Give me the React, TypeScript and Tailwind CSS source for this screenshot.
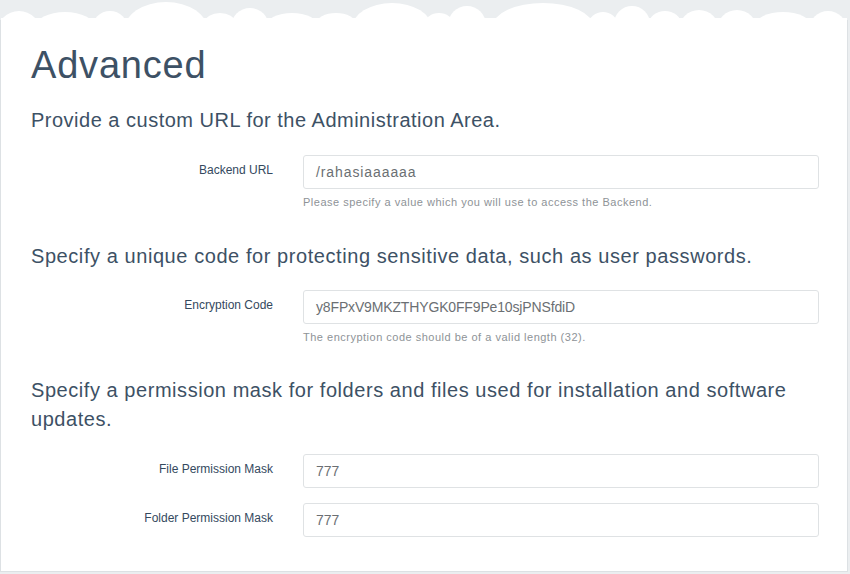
import React from "react";

const font = { fontFamily: '"Liberation Sans", Arial, Helvetica, sans-serif' };

function Clouds() {
  return (
    <svg
      className="absolute left-[1px] top-0"
      width="846"
      height="40"
      viewBox="1 0 846 40"
      aria-hidden="true"
    >
      <g fill="#ffffff">
        <rect x="0" y="18" width="850" height="22" />
        <circle cx="19" cy="33" r="22" />
        <ellipse cx="65" cy="27" rx="30" ry="15" />
        <circle cx="110" cy="29" r="18" />
        <ellipse cx="166" cy="30" rx="42" ry="28" />
        <ellipse cx="220" cy="22" rx="15" ry="9" />
        <circle cx="250" cy="27" r="19" />
        <ellipse cx="292" cy="26" rx="26" ry="13" />
        <ellipse cx="336" cy="24" rx="20" ry="11" />
        <ellipse cx="392" cy="28" rx="40" ry="25" />
        <ellipse cx="439" cy="24" rx="14" ry="11" />
        <circle cx="467" cy="25" r="19" />
        <ellipse cx="543" cy="26" rx="50" ry="23" />
        <ellipse cx="603" cy="24" rx="14" ry="12" />
        <circle cx="632" cy="24" r="18" />
        <ellipse cx="665" cy="24" rx="16" ry="13" />
        <circle cx="699" cy="30" r="20" />
        <circle cx="737" cy="30" r="20" />
        <ellipse cx="783" cy="26" rx="28" ry="14" />
        <circle cx="828" cy="30" r="19" />
      </g>
    </svg>
  );
}

function Field({
  label,
  value,
  help,
  valueClass = "",
}: {
  label: string;
  value: string;
  help?: string;
  valueClass?: string;
}) {
  return (
    <div className="flex">
      <div className="w-[242px] shrink-0 pt-[7px] text-right text-[12px] leading-[16px] text-[#34495e]">
        {label}
      </div>
      <div className="ml-[30px] flex-1">
        <div
          className={`flex h-[34px] items-center rounded-[3px] border border-[#dfe2e4] bg-white px-[12px] text-[14px] leading-[20px] text-[#6b6f73] ${valueClass}`}
        >
          {value}
        </div>
        {help && (
          <div className="mt-[5px] text-[11px] leading-[16px] tracking-[0.5px] text-[#8e9397]">
            {help}
          </div>
        )}
      </div>
    </div>
  );
}

export default function App() {
  return (
    <div
      className="relative h-[574px] w-[850px] overflow-hidden bg-[#ebeef0]"
      style={font}
    >
      <div className="ml-0 mt-[20px] h-[552px] w-[848px] border-x border-b border-[#dde1e4] bg-white pl-[30px] pr-[28px] pt-[24px]">
        <h1 className="text-[38px] font-normal leading-[42px] tracking-[0.8px] text-[#3d5165]">
          Advanced
        </h1>

        <h4 className="mt-[19px] text-[20px] font-normal leading-[30px] tracking-[0.5px] text-[#3d5165]">
          Provide a custom URL for the Administration Area.
        </h4>
        <div className="mt-[20px]">
          <Field
            label="Backend URL"
            value="/rahasiaaaaaa"
            valueClass="tracking-[0.9px]"
            help="Please specify a value which you will use to access the Backend."
          />
        </div>

        <h4 className="mt-[31px] text-[20px] font-normal leading-[30px] tracking-[0.57px] text-[#3d5165]">
          Specify a unique code for protecting sensitive data, such as user passwords.
        </h4>
        <div className="mt-[19px]">
          <Field
            label="Encryption Code"
            value="y8FPxV9MKZTHYGK0FF9Pe10sjPNSfdiD"
            valueClass="tracking-[-0.15px]"
            help="The encryption code should be of a valid length (32)."
          />
        </div>

        <h4 className="mt-[31px] pr-[30px] text-[20px] font-normal leading-[29px] tracking-[0.55px] text-[#3d5165]">
          Specify a permission mask for folders and files used for installation and software updates.
        </h4>
        <div className="mt-[20px] flex flex-col gap-[15px]">
          <Field label="File Permission Mask" value="777" />
          <Field label="Folder Permission Mask" value="777" />
        </div>
      </div>
      <Clouds />
    </div>
  );
}
